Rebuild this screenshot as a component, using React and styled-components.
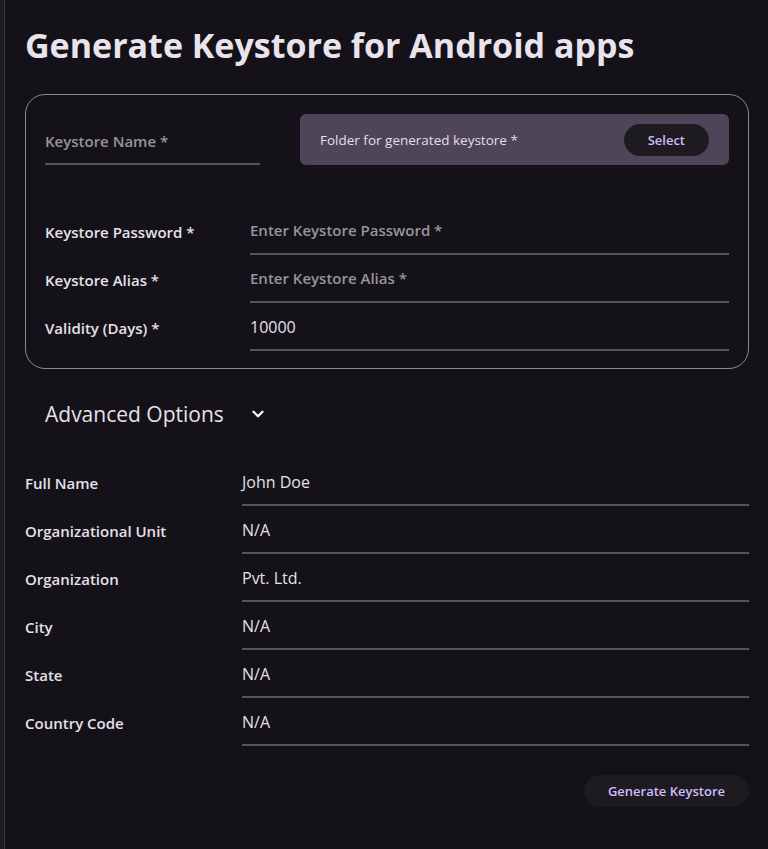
import React from "react";
import styled, { createGlobalStyle } from "styled-components";
import { ChevronDown } from "lucide-react";

const GlobalStyle = createGlobalStyle`
  html, body { margin: 0; padding: 0; background: #1b1c20; }
  body { font-family: "Open Sans", "Noto Sans", sans-serif; color: #e6e0e9; }
  * { box-sizing: border-box; }
`;

const Page = styled.div`
  display: flex;
  min-height: 849px;
  height: 849px;
  overflow: hidden;
`;

const SideStrip = styled.div`
  width: 5px;
  flex: none;
  background: #1d1e22;
  border-right: 1px solid #35363b;
`;

const Dialog = styled.main`
  flex: 1;
  background: #141218;
  padding: 22px 19px 0 20px;
  display: flex;
  flex-direction: column;
`;

const Title = styled.h1`
  margin: 0;
  font-size: 34px;
  line-height: 46px;
  font-weight: 700;
  color: #e9e3ec;
`;

const Card = styled.section`
  margin-top: 26px;
  border: 1px solid #8e8a94;
  border-radius: 20px;
  padding: 19px 19px 17px 19px;
  display: flex;
  flex-direction: column;
`;

const TopRow = styled.div`
  display: flex;
  align-items: flex-start;
  gap: 40px;
  margin-bottom: 42px;
`;

const NameField = styled.div`
  width: 215px;
  height: 51px;
  display: flex;
  align-items: center;
  border-bottom: 2px solid #57545c;
  font-size: 15px;
  font-weight: 600;
  color: #98949e;
  padding-top: 4px;
`;

const FolderBox = styled.div`
  flex: 1;
  height: 51px;
  background: #4e4559;
  border-radius: 6px;
  display: flex;
  align-items: center;
  justify-content: space-between;
  padding: 0 20px;
  font-size: 13.5px;
  color: #e4dfe8;
`;

const PillButton = styled.button`
  height: 32px;
  border: none;
  border-radius: 16px;
  background: #1d1b20;
  color: #d0bcff;
  font-family: inherit;
  font-size: 13px;
  font-weight: 600;
  padding: 0 24px;
  cursor: pointer;
`;

const FieldGrid = styled.div`
  display: grid;
  grid-template-columns: ${(p) => p.$label}px 1fr;
`;

const Label = styled.div`
  height: 48px;
  display: flex;
  align-items: center;
  padding-top: 1px;
  font-size: 15px;
  font-weight: 600;
  color: #e6e0e9;
`;

const Value = styled.div`
  height: 48px;
  display: flex;
  align-items: center;
  padding-top: ${(p) => (p.$placeholder ? 0 : 2)}px;
  border-bottom: 2px solid #57545c;
  font-size: ${(p) => (p.$placeholder ? 15 : 16)}px;
  color: ${(p) => (p.$placeholder ? "#98949e" : "#e6e0e9")};
  font-weight: ${(p) => (p.$placeholder ? 600 : 400)};
`;

const AdvancedHeader = styled.div`
  height: 48px;
  margin: 21px 0 20px;
  padding-left: 20px;
  display: flex;
  align-items: center;
  gap: 25px;
  font-size: 21px;
  color: #e6e0e9;
`;

const Footer = styled.div`
  display: flex;
  justify-content: flex-end;
  margin-top: 29px;
`;

const mainFields = [
  { label: "Keystore Password *", value: "Enter Keystore Password *", placeholder: true },
  { label: "Keystore Alias *", value: "Enter Keystore Alias *", placeholder: true },
  { label: "Validity (Days) *", value: "10000" },
];

const advancedFields = [
  ["Full Name", "John Doe"],
  ["Organizational Unit", "N/A"],
  ["Organization", "Pvt. Ltd."],
  ["City", "N/A"],
  ["State", "N/A"],
  ["Country Code", "N/A"],
];

export default function App() {
  return (
    <>
      <GlobalStyle />
      <Page>
        <SideStrip />
        <Dialog>
          <Title>Generate Keystore for Android apps</Title>
          <Card>
            <TopRow>
              <NameField>Keystore Name *</NameField>
              <FolderBox>
                <span>Folder for generated keystore *</span>
                <PillButton>Select</PillButton>
              </FolderBox>
            </TopRow>
            <FieldGrid $label={205}>
              {mainFields.map((f) => (
                <React.Fragment key={f.label}>
                  <Label>{f.label}</Label>
                  <Value $placeholder={f.placeholder}>{f.value}</Value>
                </React.Fragment>
              ))}
            </FieldGrid>
          </Card>
          <AdvancedHeader>
            <span>Advanced Options</span>
            <ChevronDown size={18} strokeWidth={3} color="#ffffff" />
          </AdvancedHeader>
          <FieldGrid $label={217}>
            {advancedFields.map(([l, v]) => (
              <React.Fragment key={l}>
                <Label>{l}</Label>
                <Value>{v}</Value>
              </React.Fragment>
            ))}
          </FieldGrid>
          <Footer>
            <PillButton>Generate Keystore</PillButton>
          </Footer>
        </Dialog>
      </Page>
    </>
  );
}
